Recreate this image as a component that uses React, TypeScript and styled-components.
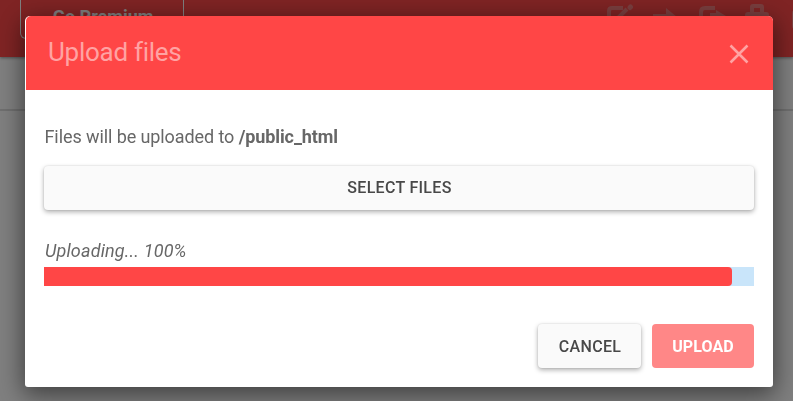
import React from "react";
import styled, { createGlobalStyle } from "styled-components";

const GlobalStyle = createGlobalStyle`
  *, *::before, *::after { box-sizing: border-box; }
  html, body { margin: 0; height: 100%; overflow: hidden; }
  body { font-family: Roboto, "Liberation Sans", sans-serif; background: #fff; }
`;

const Page = styled.div`
  height: 401px;
  display: flex;
  flex-direction: column;
`;

const Toolbar = styled.header`
  height: 57px;
  flex: none;
  display: flex;
  align-items: flex-start;
  justify-content: space-between;
  padding-left: 20px;
  background: #ff4848;
  box-shadow: 0 1px 3px rgba(0, 0, 0, 0.4);
`;

const PremiumLink = styled.a`
  width: 164px;
  height: 40px;
  margin-top: -1px;
  padding: 6px 0 0 2px;
  border: 1px solid #fff;
  border-top: 0;
  border-radius: 0 0 6px 6px;
  color: #fff;
  font-size: 18px;
  font-weight: 700;
  line-height: 24px;
  text-align: center;
`;

const Tools = styled.nav`
  display: flex;
  gap: 18px;
  width: 187px;
  padding-top: 3px;
  overflow: hidden;
  color: #f57e7e;
  svg { flex: none; }
`;

const SubBar = styled.div`
  height: 54px;
  flex: none;
  border-bottom: 2px solid #dedede;
`;

const Overlay = styled.div`
  position: fixed;
  inset: 0;
  padding: 16px 20px 14px 25px;
  background: rgba(0, 0, 0, 0.5);
`;

const Dialog = styled.section`
  width: 748px;
  height: 371px;
  display: flex;
  flex-direction: column;
  overflow: hidden;
  border-radius: 5px 5px 3px 3px;
  background: #fff;
  box-shadow: 0 6px 24px 2px rgba(0, 0, 0, 0.5);
`;

const DialogHeader = styled.div`
  height: 74px;
  flex: none;
  display: flex;
  align-items: center;
  justify-content: space-between;
  margin-left: 1px;
  padding: 0 24px 3px 22px;
  border-top-left-radius: 5px;
  background: #ff4646;
  color: #ffa3a3;
`;

const Title = styled.h1`
  margin: 0;
  font-size: 26px;
  font-weight: 400;
  line-height: 32px;
  letter-spacing: -0.27px;
`;

const CloseButton = styled.button`
  width: 20px;
  height: 20px;
  margin-top: 5px;
  padding: 0;
  border: 0;
  background: none;
  color: inherit;
  svg { display: block; }
`;

const Content = styled.div`
  flex: 1;
  display: flex;
  flex-direction: column;
  padding: 34px 19px 19px;
  color: #676767;
  font-size: 18px;
  line-height: 26px;
`;

const Destination = styled.p`
  margin: 0 0 16px;
  padding-left: 0.5px;
  letter-spacing: -0.09px;
`;

const Button = styled.button<{ $kind?: "primary"; $width: string; $nudge?: number }>`
  width: ${(p) => p.$width};
  height: 44px;
  flex: none;
  padding: ${(p) => p.$nudge ?? 0}px 0 0 ${(p) => (p.$kind ? 0 : 1)}px;
  border: 0;
  border-radius: 4px;
  font: ${(p) => (p.$kind ? 700 : 500)} 16px/42px Roboto, sans-serif;
  letter-spacing: ${(p) => (p.$kind ? "0.1px" : "0.3px")};
  color: ${(p) => (p.$kind ? "#fff" : "#484848")};
  background: ${(p) => (p.$kind ? "#ff8787" : "#fafafa")};
  box-shadow: ${(p) =>
    p.$kind ? "none" : "0 2px 5px rgba(0, 0, 0, 0.32), 0 0 2px rgba(0, 0, 0, 0.12)"};
`;

const Status = styled.em`
  margin-top: 28px;
  padding-left: 1px;
  letter-spacing: 0.16px;
`;

const Progress = styled.div`
  height: 19px;
  flex: none;
  margin-top: 3px;
  background: #c9e5fa;
`;

const ProgressFill = styled.div`
  width: 688px;
  height: 100%;
  border-radius: 0 4px 4px 0;
  background: #ff4646;
`;

const Actions = styled.div`
  display: flex;
  justify-content: flex-end;
  gap: 11px;
  margin-top: auto;
`;

function ToolIcons() {
  const stroke = {
    fill: "none",
    stroke: "currentColor",
    strokeWidth: 4,
    strokeLinejoin: "round" as const,
  };
  return (
    <Tools>
      <svg width="28" height="26" viewBox="0 0 28 26" {...stroke}>
        <path d="M17 5H6q-3 0-3 3v12q0 3 3 3h12q3 0 3-3v-5M10 17L21 6" />
        <path d="M24 4.5l.5-.5" strokeWidth="5" strokeLinecap="round" />
      </svg>
      <svg width="28" height="26" viewBox="0 0 28 26" fill="currentColor">
        <path d="M1 11h13V5l11 9-11 9v-7H1z" />
      </svg>
      <svg width="28" height="26" viewBox="0 0 28 26" {...stroke}>
        <path d="M17 5H7q-4 0-4 4v10q0 4 4 4h11M12 12h8" />
        <path d="M18 7l10 6-10 6z" fill="currentColor" stroke="none" />
      </svg>
      <svg width="28" height="26" viewBox="0 0 28 26" fill="currentColor">
        <path d="M6 9V4q0-3 3-3h8q3 0 3 3v5h2q3 0 3 3v12H1V12q0-3 3-3zM10 5v4h6V5z" fillRule="evenodd" />
      </svg>
      <svg width="28" height="26" viewBox="0 0 28 26" fill="currentColor">
        <rect x="2" y="7" width="24" height="19" rx="3" />
      </svg>
    </Tools>
  );
}

export default function App() {
  return (
    <>
      <GlobalStyle />
      <Page>
        <Toolbar>
          <PremiumLink>Go Premium</PremiumLink>
          <ToolIcons />
        </Toolbar>
        <SubBar />
      </Page>
      <Overlay>
        <Dialog role="dialog" aria-label="Upload files">
          <DialogHeader>
            <Title>Upload files</Title>
            <CloseButton aria-label="Close">
              <svg width="20" height="20" viewBox="0 0 20 20" stroke="currentColor" strokeWidth="2.5">
                <path d="M1.5 1.5l17 17M18.5 1.5l-17 17" />
              </svg>
            </CloseButton>
          </DialogHeader>
          <Content>
            <Destination>
              Files will be uploaded to <strong>/public_html</strong>
            </Destination>
            <Button $width="100%">SELECT FILES</Button>
            <Status>Uploading... 100%</Status>
            <Progress>
              <ProgressFill />
            </Progress>
            <Actions>
              <Button $width="103px" $nudge={2}>CANCEL</Button>
              <Button $width="102px" $kind="primary" $nudge={2}>UPLOAD</Button>
            </Actions>
          </Content>
        </Dialog>
      </Overlay>
    </>
  );
}
